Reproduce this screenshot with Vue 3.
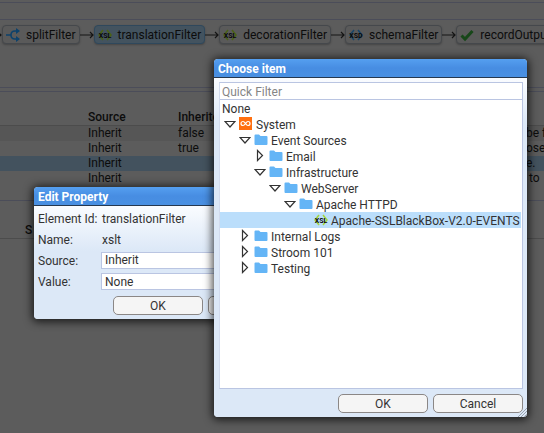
<script setup>
import { ref } from 'vue'

const elements = [
  { name: 'splitFilter', icon: 'split' },
  { name: 'translationFilter', icon: 'xsl', active: true },
  { name: 'decorationFilter', icon: 'xsl' },
  { name: 'schemaFilter', icon: 'xsd' },
  { name: 'recordOutput', icon: 'tick' },
]

const properties = [
  { source: 'Inherit', inherited: 'false', note: 'be f' },
  { source: 'Inherit', inherited: 'true', note: 'ose' },
  { source: 'Inherit', inherited: '', note: 'e.', active: true },
  { source: 'Inherit', inherited: '', note: '\u00a0to' },
]

const tree = [
  { name: 'System', depth: 0, open: true, icon: 'system' },
  { name: 'Event Sources', depth: 1, open: true, icon: 'folder' },
  { name: 'Email', depth: 2, open: false, icon: 'folder' },
  { name: 'Infrastructure', depth: 2, open: true, icon: 'folder' },
  { name: 'WebServer', depth: 3, open: true, icon: 'folder' },
  { name: 'Apache HTTPD', depth: 4, open: true, icon: 'folder' },
  { name: 'Apache-SSLBlackBox-V2.0-EVENTS', depth: 5, leaf: true, icon: 'xsl' },
  { name: 'Internal Logs', depth: 1, open: false, icon: 'folder' },
  { name: 'Stroom 101', depth: 1, open: false, icon: 'folder' },
  { name: 'Testing', depth: 1, open: false, icon: 'folder' },
]

const filter = ref('')
const source = ref('Inherit')
const value = ref('None')
</script>

<template>
  <div class="page">
    <div class="strip"></div>
    <div class="toolbar"></div>
    <div class="pipeline">
      <template v-for="el in elements" :key="el.name">
        <svg class="arrow" viewBox="0 0 14 10"><path d="M0 5H13M10 2L13 5L10 8" /></svg>
        <div class="element" :class="{ active: el.active }">
          <svg v-if="el.icon === 'split'" class="glyph" viewBox="0 0 14 14">
            <path class="split" d="M0 7H5M12 3H9Q5 3 5 7T9 11H12" />
            <path class="split-head" d="M10 0L14 3L10 6ZM10 8L14 11L10 14Z" />
          </svg>
          <svg v-else-if="el.icon === 'tick'" class="glyph" viewBox="0 0 14 14">
            <path class="tick" d="M1.5 7.5L5 11L12.500 3" />
          </svg>
          <svg v-else class="glyph" :class="el.icon" viewBox="0 0 14 14">
            <path class="chevrons" d="M5 2L1 7L5 12M9 2L13 7L9 12" />
            <text x="7" y="10" text-anchor="middle">{{ el.icon.toUpperCase() }}</text>
          </svg>
          <span>{{ el.name }}</span>
        </div>
      </template>
    </div>
    <div class="splitter"></div>
    <table class="properties">
      <thead>
        <tr><th class="lead"></th><th class="source">Source</th><th class="inherited">Inherited</th><th></th></tr>
      </thead>
      <tbody>
        <tr v-for="(p, i) in properties" :key="i" :class="{ active: p.active }">
          <td></td><td>{{ p.source }}</td><td>{{ p.inherited }}</td><td>{{ p.note }}</td>
        </tr>
      </tbody>
    </table>
    <div class="splitter lower"></div>
    <div class="list-head">S</div>

    <section class="dialog edit" role="dialog" aria-labelledby="edit-title">
      <h2 id="edit-title">Edit Property</h2>
      <form class="body" @submit.prevent>
        <div class="fields">
          <span>Element Id:</span><span class="static">translationFilter</span>
          <span>Name:</span><span class="static">xslt</span>
          <label for="source">Source:</label>
          <select id="source" v-model="source"><option>Inherit</option></select>
          <label for="value">Value:</label>
          <input id="value" v-model="value" type="text" />
        </div>
        <div class="buttons"><button type="button">OK</button><button type="button" aria-label="Cancel"></button></div>
      </form>
    </section>

    <section class="dialog choose" role="dialog" aria-labelledby="choose-title">
      <h2 id="choose-title">Choose item</h2>
      <div class="body">
        <div class="picker">
          <input v-model="filter" class="filter" type="text" placeholder="Quick Filter" aria-label="Quick Filter" />
          <ul class="tree" role="tree">
            <li class="none" role="treeitem"><span>None</span></li>
            <li
              v-for="item in tree"
              :key="item.name"
              role="treeitem"
              :class="{ selected: item.leaf }"
              :style="{ paddingLeft: 4 + item.depth * 15 + 'px' }"
            >
              <svg class="expander" viewBox="0 0 12 14">
                <path v-if="!item.leaf && item.open" d="M1 4.500H11L6 10Z" />
                <path v-else-if="!item.leaf" d="M3.500 1.500L8.500 6.500L3.500 11.500Z" />
              </svg>
              <svg v-if="item.icon === 'folder'" class="glyph" viewBox="0 0 14 14">
                <path class="folder" d="M1.500 1.500H5L6.500 3H12.500Q13.500 3 13.500 4V11Q13.500 12 12.500 12H1.500Q.500 12 .500 11V2.500Q.500 1.500 1.500 1.500Z" />
              </svg>
              <svg v-else-if="item.icon === 'system'" class="glyph" viewBox="0 0 14 14">
                <rect x="0" y="0" width="13" height="13" fill="#ff6f0f" />
                <path class="loop" d="M6.500 6.500C5.500 5 4.800 4.500 4 4.500A2 2 0 0 0 4 8.500C4.800 8.500 5.500 8 6.500 6.500S8.200 4.500 9 4.500A2 2 0 0 1 9 8.500C8.200 8.500 7.500 8 6.500 6.500Z" />
              </svg>
              <svg v-else class="glyph xsl bright" viewBox="0 0 14 14">
                <path class="chevrons" d="M5 2L1 7L5 12M9 2L13 7L9 12" />
                <text x="7" y="10" text-anchor="middle">XSL</text>
              </svg>
              <span>{{ item.name }}</span>
            </li>
          </ul>
        </div>
        <div class="buttons"><button type="button">OK</button><button type="button">Cancel</button></div>
      </div>
      <svg class="grip" viewBox="0 0 9 9"><path d="M0 9L9 0M3 9L9 3M6 9L9 6" /></svg>
    </section>
  </div>
</template>

<style>
body {
  margin: 0;
  background: #5c5c5c;
}
</style>

<style scoped>
.page {
  position: relative;
  min-height: 100vh;
  overflow: hidden;
  background: #5c5c5c;
  color: #0c0c0c;
  font: 12px/16px Roboto, sans-serif;
}
.strip {
  height: 2px;
  border-bottom: 1px solid #4b4d59;
}
.toolbar {
  height: 16px;
  border-bottom: 1px solid #4b4d59;
}
.pipeline {
  display: flex;
  align-items: center;
  height: 29px;
  margin: 0 0 38px -12px;
}
.arrow {
  flex: none;
  width: 14px;
  height: 10px;
  fill: none;
  stroke: #151515;
  stroke-width: 1.2;
}
.element {
  display: flex;
  flex: none;
  align-items: center;
  gap: 6px;
  height: 19px;
  box-sizing: border-box;
  padding: 0 3px;
  border: 1px solid #45484c;
  border-radius: 4px;
  background: #5a5a5a;
  box-shadow: 0 1px 2px rgba(0, 0, 0, 0.25);
  white-space: nowrap;
}
.element.active {
  border-color: #2f485c;
  background: #43535f;
}
.glyph {
  flex: none;
  width: 14px;
  height: 14px;
  overflow: visible;
}
.split {
  fill: none;
  stroke: #0d426c;
  stroke-width: 1.6;
}
.split-head {
  fill: #0d426c;
}
.tick {
  fill: none;
  stroke: #174719;
  stroke-width: 3;
}
.chevrons {
  fill: none;
  stroke: #4b6215;
  stroke-width: 1.5;
}
.xsd .chevrons {
  stroke: #164468;
}
.bright .chevrons {
  stroke: #a5d63a;
}
.glyph text {
  font: bold 7px Roboto, sans-serif;
  fill: #080808;
}
.splitter {
  height: 3px;
  border: 1px solid #4b4d59;
  border-width: 1px 0;
}
.properties {
  width: 100%;
  table-layout: fixed;
  border-collapse: collapse;
  white-space: nowrap;
}
.properties th,
.properties td {
  padding: 0;
  line-height: 15px;
  height: 15px;
  text-align: left;
}
.properties th {
  height: 33px;
  vertical-align: bottom;
  border-bottom: 1px solid #4c4c4c;
  font-weight: 500;
}
.properties .lead {
  width: 88px;
}
.properties .source {
  width: 90px;
}
.properties .inherited {
  width: 348px;
}
.properties tbody tr:nth-child(odd) {
  background: #565656;
}
.properties tbody tr.active {
  background: #43525e;
}
.lower {
  margin-top: 14px;
  border-bottom: 0;
}
.list-head {
  padding: 18px 0 0 25px;
  border-bottom: 1px solid #4c4c4c;
  font-weight: 500;
}
.dialog {
  position: absolute;
  box-sizing: border-box;
  border-radius: 4px;
  background: #dce8f7;
  box-shadow: 0 1px 8px 2px rgba(0, 0, 0, 0.7);
  overflow: hidden;
  color: #333;
}
.edit {
  left: 34px;
  top: 187px;
  width: 268px;
}
.choose {
  left: 214px;
  top: 59px;
  width: 313px;
}
h2 {
  margin: 0;
  height: 18px;
  padding-left: 4px;
  border-bottom: 1px solid #26384f;
  background: linear-gradient(#559ff0, #478de2 50%, #4a90e2);
  color: #fff;
  font: bold 12px/20px Roboto, sans-serif;
}
.body {
  padding: 4px;
  background: linear-gradient(#fafcff, #dce8f7 45px);
}
.fields {
  display: grid;
  grid-template-columns: 59px 1fr;
  grid-auto-rows: 17px;
  gap: 4px;
  align-items: center;
  white-space: nowrap;
}
.static {
  padding: 1px 0 0 1px;
}
select,
input {
  box-sizing: border-box;
  width: 100%;
  height: 17px;
  margin: 0;
  padding: 0 3px;
  border: 1px solid #bac5e2;
  border-radius: 0;
  background: #fff;
  color: #333;
  font: 12px/15px Roboto, sans-serif;
  appearance: none;
  outline: none;
}
.buttons {
  display: flex;
  justify-content: flex-end;
  gap: 5px;
  padding-top: 5px;
}
.edit .buttons {
  padding-top: 6px;
}
button {
  width: 90px;
  height: 19px;
  padding: 0;
  border: 1px solid #8b8786;
  border-radius: 5px;
  background: #f5f5f5;
  color: #333;
  font: 12px/16px Roboto, sans-serif;
}
.choose .body {
  padding: 4px 4px 4px 5px;
}
.picker {
  border: 1px solid #bac5e2;
  border-left-color: #d2dbee;
  background: #fff;
}
.filter {
  display: block;
  height: 17px;
  padding: 1px 2px 0;
  border-width: 0 0 1px;
}
.filter::placeholder {
  color: #858585;
  opacity: 1;
}
.tree {
  height: 288px;
  margin: 0;
  padding: 0;
  list-style: none;
  color: #333;
}
.tree li {
  display: flex;
  align-items: center;
  gap: 3px;
  height: 16px;
  margin-right: 1px;
  white-space: nowrap;
}
.tree span {
  padding-top: 2px;
}
.tree .none {
  padding-left: 2px;
}
.tree .selected {
  background: #bbdefb;
}
.expander {
  flex: none;
  width: 12px;
  height: 14px;
  fill: #fff;
  stroke: #333;
  stroke-width: 1.2;
}
.folder {
  fill: #64b5f6;
}
.loop {
  fill: none;
  stroke: #fff;
  stroke-width: 1.2;
}
.grip {
  position: absolute;
  right: 0;
  bottom: 0;
  width: 9px;
  height: 9px;
  fill: none;
  stroke: #9aa3b0;
  stroke-width: 1;
}
</style>
